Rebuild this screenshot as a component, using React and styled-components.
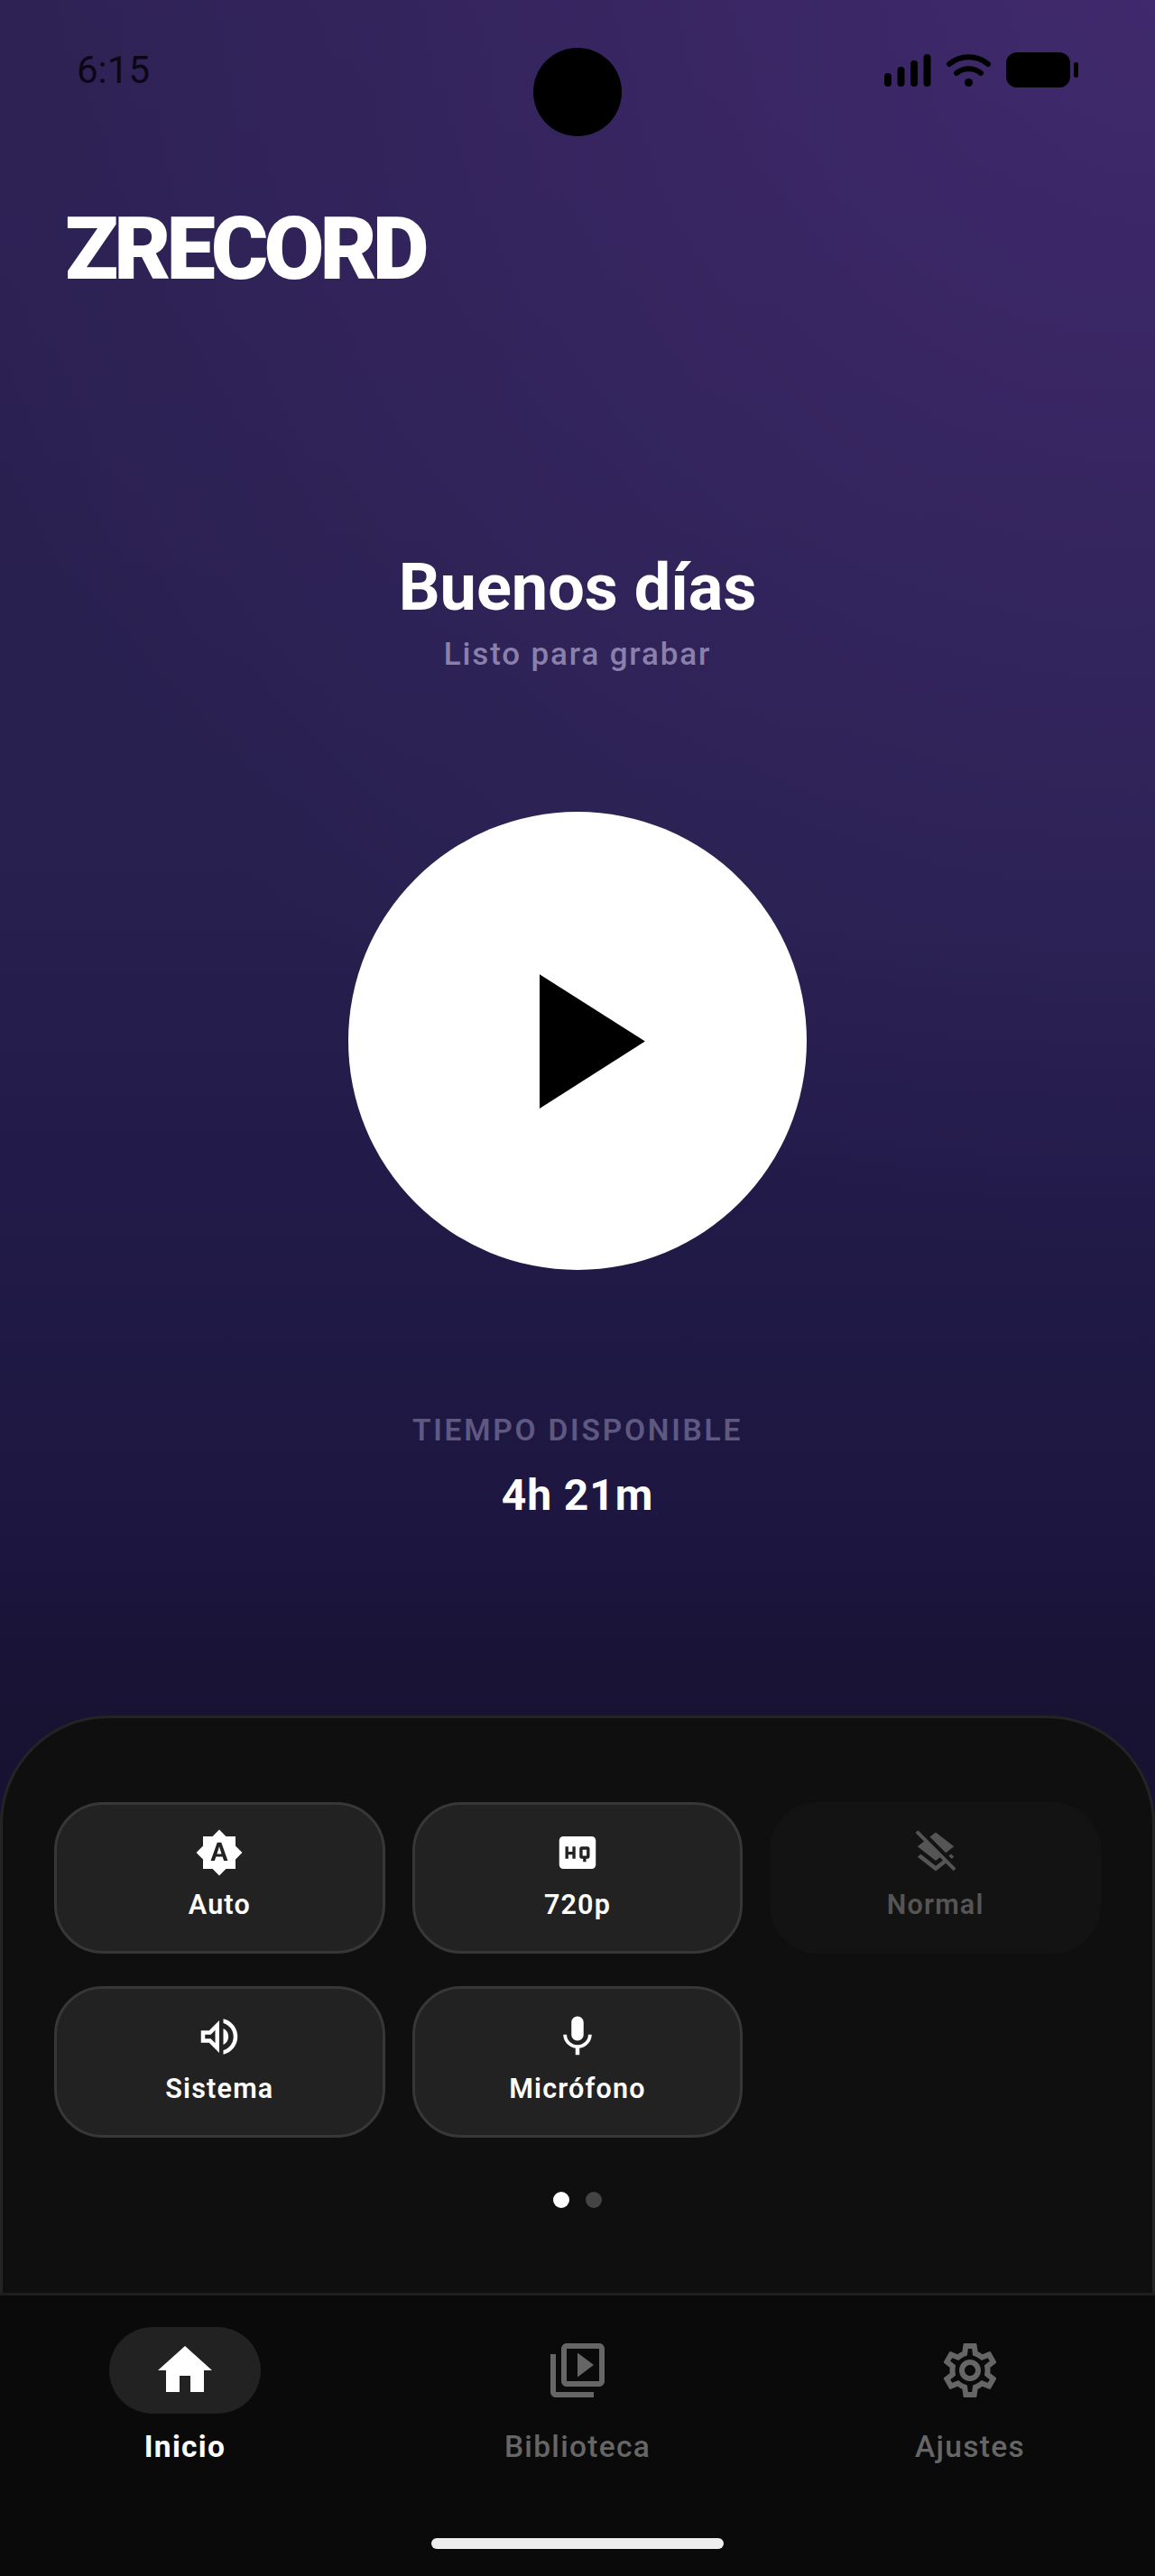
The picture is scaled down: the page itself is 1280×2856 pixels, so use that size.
import React from "react";
import styled, { createGlobalStyle } from "styled-components";
import {
  MdBrightnessAuto,
  MdHighQuality,
  MdLayersClear,
  MdOutlineVolumeUp,
  MdMic,
  MdHome,
  MdOutlineVideoLibrary,
  MdOutlineSettings,
  MdPlayArrow,
} from "react-icons/md";

const GlobalStyle = createGlobalStyle`
  html, body {
    margin: 0;
    padding: 0;
    background: #0a0a0a;
  }
  * {
    box-sizing: border-box;
  }
`;

const Screen = styled.div`
  position: relative;
  width: 1280px;
  height: 2856px;
  display: flex;
  flex-direction: column;
  overflow: hidden;
  font-family: Roboto, "Liberation Sans", sans-serif;
  background:
    radial-gradient(circle 1400px at 100% 0, rgba(110, 60, 170, 0.3), rgba(110, 60, 170, 0) 100%),
    linear-gradient(180deg, #2c2152 0%, #27204e 35%, #221b49 45.5%, #1c1640 59.5%, #181233 66.5%, #151029 100%);
`;

const StatusBar = styled.div`
  display: flex;
  justify-content: space-between;
  align-items: flex-start;
  padding: 57px 84px 0 85px;
  height: 99px;
`;

const Time = styled.span`
  font-size: 42px;
  line-height: 1;
  color: #0b0716;
`;

const StatusIcons = styled.div`
  margin-top: 1px;
  line-height: 0;
`;

const Camera = styled.div`
  position: absolute;
  top: 53px;
  left: 591px;
  width: 98px;
  height: 98px;
  border-radius: 50%;
  background: #000;
`;

const Logo = styled.div`
  margin: 129px 0 0 72px;
  font-size: 97px;
  line-height: 1;
  font-weight: 900;
  letter-spacing: -5px;
  color: #fff;
`;

const Greeting = styled.h1`
  margin: 291px 0 0;
  font-size: 72px;
  line-height: 1;
  font-weight: 700;
  text-align: center;
  color: #fff;
`;

const Subtitle = styled.p`
  margin: 20px 0 0;
  font-size: 35px;
  line-height: 1;
  font-weight: 500;
  letter-spacing: 1.85px;
  text-align: center;
  color: #8a80ab;
`;

const PlayButton = styled.button`
  align-self: center;
  width: 508px;
  height: 508px;
  margin-top: 157px;
  padding: 0;
  border: 0;
  border-radius: 50%;
  background: #fff;
  display: flex;
  align-items: center;
  justify-content: center;
  color: #000;
`;

const TimeLabel = styled.div`
  margin-top: 161px;
  font-size: 33.5px;
  line-height: 1;
  font-weight: 600;
  letter-spacing: 2.75px;
  text-align: center;
  color: #5f5880;
`;

const TimeValue = styled.div`
  margin-top: 31px;
  font-size: 48px;
  line-height: 1;
  font-weight: 700;
  letter-spacing: 0.9px;
  text-align: center;
  color: #fff;
`;

const Panel = styled.section`
  margin-top: auto;
  padding: 93px 57px 94px;
  background: #0f0f0f;
  border: 3px solid #242424;
  border-radius: 120px 120px 0 0;
`;

const OptionGrid = styled.div`
  display: grid;
  grid-template-columns: repeat(3, 1fr);
  column-gap: 30px;
  row-gap: 36px;
`;

const Option = styled.button`
  height: 168px;
  padding: 26px 0 0;
  display: flex;
  flex-direction: column;
  align-items: center;
  gap: 16px;
  border-radius: 54px;
  border: 3px solid ${(p) => (p.$disabled ? "#131313" : "#373737")};
  background: ${(p) => (p.$disabled ? "#131313" : "#222222")};
  color: ${(p) => (p.$disabled ? "#555555" : "#ffffff")};
  font-family: inherit;
`;

const OptionLabel = styled.span`
  font-size: 30.5px;
  line-height: 1;
  font-weight: 600;
  letter-spacing: 1.2px;
`;

const Dots = styled.div`
  display: flex;
  justify-content: center;
  gap: 18px;
  margin-top: 60px;
`;

const Dot = styled.span`
  width: 18px;
  height: 18px;
  border-radius: 50%;
  background: ${(p) => (p.$active ? "#ffffff" : "#444444")};
`;

const BottomNav = styled.nav`
  position: relative;
  padding: 35px 0 30px;
  background: #0a0a0a;
  border-top: 3px solid #1f1f1f;
  margin-top: -3px;
`;

const NavItems = styled.div`
  display: grid;
  grid-template-columns: repeat(3, 435px);
  justify-content: center;
`;

const NavItem = styled.div`
  display: flex;
  flex-direction: column;
  align-items: center;
  gap: 20px;
  color: ${(p) => (p.$active ? "#ffffff" : "#666666")};
`;

const NavIcon = styled.div`
  width: 168px;
  height: 96px;
  border-radius: 48px;
  display: flex;
  align-items: center;
  justify-content: center;
  background: ${(p) => (p.$active ? "#222222" : "transparent")};
`;

const NavLabel = styled.span`
  font-size: 33.5px;
  line-height: 1;
  font-weight: ${(p) => (p.$active ? 700 : 500)};
  letter-spacing: 1.3px;
`;

const HomeBar = styled.div`
  width: 324px;
  height: 12px;
  margin: 85px auto 0;
  border-radius: 6px;
  background: #eeeeee;
`;

function StatusGlyphs() {
  return (
    <svg width="216" height="42" viewBox="0 -2 216 42" fill="#000">
      <rect x="0" y="21" width="8" height="15" rx="4" />
      <rect x="14.5" y="14" width="8" height="22" rx="4" />
      <rect x="29" y="7" width="8" height="29" rx="4" />
      <rect x="43.5" y="0" width="8" height="36" rx="4" />
      <path
        d="M72 11 C84 0.500 103 0.500 115 11"
        fill="none"
        stroke="#000"
        strokeWidth="6"
        strokeLinecap="round"
      />
      <path
        d="M80 21 C87.500 14.500 99.500 14.500 107 21"
        fill="none"
        stroke="#000"
        strokeWidth="6"
        strokeLinecap="round"
      />
      <circle cx="93.500" cy="31.500" r="4.500" />
      <rect x="135" y="-2" width="71" height="39" rx="12" />
      <rect x="210" y="9" width="5" height="17" rx="2" />
    </svg>
  );
}

const options = [
  { label: "Auto", icon: MdBrightnessAuto },
  { label: "720p", icon: MdHighQuality },
  { label: "Normal", icon: MdLayersClear, disabled: true },
  { label: "Sistema", icon: MdOutlineVolumeUp },
  { label: "Micrófono", icon: MdMic },
];

const tabs = [
  { label: "Inicio", icon: MdHome, active: true },
  { label: "Biblioteca", icon: MdOutlineVideoLibrary },
  { label: "Ajustes", icon: MdOutlineSettings },
];

export default function App() {
  return (
    <Screen>
      <GlobalStyle />
      <StatusBar>
        <Time>6:15</Time>
        <StatusIcons>
          <StatusGlyphs />
        </StatusIcons>
      </StatusBar>
      <Camera />
      <Logo>ZRECORD</Logo>
      <Greeting>Buenos días</Greeting>
      <Subtitle>Listo para grabar</Subtitle>
      <PlayButton>
        <MdPlayArrow size={255} />
      </PlayButton>
      <TimeLabel>TIEMPO DISPONIBLE</TimeLabel>
      <TimeValue>4h 21m</TimeValue>
      <Panel>
        <OptionGrid>
          {options.map((o) => (
            <Option key={o.label} $disabled={o.disabled}>
              <o.icon size={54} />
              <OptionLabel>{o.label}</OptionLabel>
            </Option>
          ))}
        </OptionGrid>
        <Dots>
          <Dot $active />
          <Dot />
        </Dots>
      </Panel>
      <BottomNav>
        <NavItems>
          {tabs.map((t) => (
            <NavItem key={t.label} $active={t.active}>
              <NavIcon $active={t.active}>
                <t.icon size={72} />
              </NavIcon>
              <NavLabel $active={t.active}>{t.label}</NavLabel>
            </NavItem>
          ))}
        </NavItems>
        <HomeBar />
      </BottomNav>
    </Screen>
  );
}
